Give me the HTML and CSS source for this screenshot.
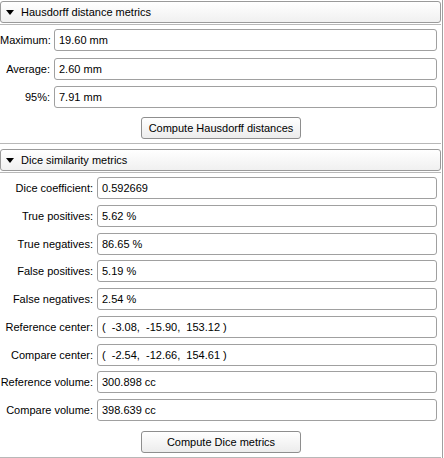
FILE: index.html
```html
<!DOCTYPE html>
<html>
<head>
<meta charset="utf-8">
<link rel="stylesheet" href="styles.css">
</head>
<body>
<div class="panel">
  <section class="group">
    <div class="header"><span class="arrow"></span><span class="title">Hausdorff distance metrics</span></div>
    <div class="frame frame-h">
      <div class="rows rows-h">
        <div class="row"><label>Maximum:</label><div class="field">19.60 mm</div></div>
        <div class="row"><label>Average:</label><div class="field">2.60 mm</div></div>
        <div class="row"><label>95%:</label><div class="field">7.91 mm</div></div>
      </div>
      <div class="btn-row"><button class="btn">Compute Hausdorff distances</button></div>
    </div>
  </section>
  <section class="group group-d">
    <div class="header"><span class="arrow"></span><span class="title">Dice similarity metrics</span></div>
    <div class="frame frame-d">
      <div class="rows rows-d">
        <div class="row"><label>Dice coefficient:</label><div class="field">0.592669</div></div>
        <div class="row"><label>True positives:</label><div class="field">5.62 %</div></div>
        <div class="row"><label>True negatives:</label><div class="field">86.65 %</div></div>
        <div class="row"><label>False positives:</label><div class="field">5.19 %</div></div>
        <div class="row"><label>False negatives:</label><div class="field">2.54 %</div></div>
        <div class="row"><label>Reference center:</label><div class="field pre">(  -3.08,  -15.90,  153.12 )</div></div>
        <div class="row"><label>Compare center:</label><div class="field pre">(  -2.54,  -12.66,  154.61 )</div></div>
        <div class="row"><label>Reference volume:</label><div class="field">300.898 cc</div></div>
        <div class="row"><label>Compare volume:</label><div class="field">398.639 cc</div></div>
      </div>
      <div class="btn-row"><button class="btn">Compute Dice metrics</button></div>
    </div>
  </section>
</div>
</body>
</html>
```
FILE: styles.css
```css
html, body {
  margin: 0;
  padding: 0;
  background: #ffffff;
}
body {
  font-family: "Liberation Sans", Arial, sans-serif;
  font-size: 11px;
  color: #000;
}
.panel {
  width: 442px;
  height: 458px;
  border-right: 1px solid #a0a0a0;
  overflow: hidden;
}
.header {
  margin-top: 1px;
  width: 439px;
  height: 20px;
  border: 1px solid #9a9a9a;
  border-radius: 3px;
  background: linear-gradient(#ffffff, #f0f0f0);
  display: flex;
  align-items: center;
}
.arrow {
  width: 0;
  height: 0;
  margin-left: 5px;
  margin-right: 7px;
  border-left: 4px solid transparent;
  border-right: 4px solid transparent;
  border-top: 5px solid #000;
}
.title {
  font-size: 11px;
}
.frame {
  margin-top: 1px;
  border-top: 1px solid #b8b8b8;
  border-bottom: 1px solid #b8b8b8;
  width: 441px;
}
.rows {
  display: flex;
  flex-direction: column;
  padding-right: 4px;
}
.rows-h {
  padding-top: 4px;
  gap: 6.5px;
}
.rows-d {
  padding-top: 4px;
  gap: 5.75px;
}
.row {
  display: flex;
  align-items: center;
  gap: 4px;
}
.row label {
  text-align: right;
  flex: none;
}
.rows-h label { width: 50px; }
.rows-d label { width: 93px; }
.field {
  flex: 1;
  height: 20px;
  border: 1px solid #a0a0a0;
  border-radius: 3px;
  background: #fff;
  display: flex;
  align-items: center;
  padding-left: 4px;
  box-sizing: content-box;
}
.pre { white-space: pre; }
.btn-row {
  display: flex;
  padding-left: 141px;
  padding-top: 9px;
  padding-bottom: 4px;
}
.btn {
  width: 160px;
  height: 22px;
  border: 1px solid #8e8e8e;
  border-radius: 3px;
  background: linear-gradient(#ffffff, #ececec);
  font-family: "Liberation Sans", Arial, sans-serif;
  font-size: 11px;
  color: #000;
  padding: 0;
}
.group-d .header {
  margin-top: 5px;
}
.frame-d .btn-row {
  padding-top: 10px;
}
```
